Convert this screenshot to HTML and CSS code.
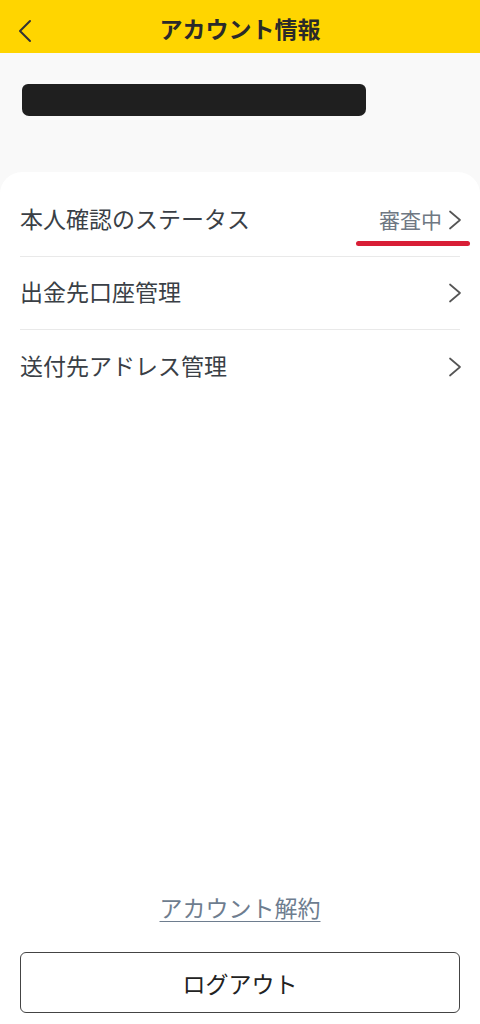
FILE: index.html
```html
<!DOCTYPE html>
<html lang="ja">
<head>
<meta charset="utf-8">
<link rel="stylesheet" href="styles.css">
</head>
<body>
<div class="app">
  <header class="header">
    <span class="back">
      <svg width="16" height="24" viewBox="0 0 16 24"><path d="M13 2 L3 12 L13 22" fill="none" stroke="#333" stroke-width="2" stroke-linecap="round" stroke-linejoin="round"/></svg>
    </span>
    <h1 class="title">アカウント情報</h1>
  </header>
  <section class="profile">
    <div class="redact"></div>
  </section>
  <main class="card">
    <div class="row">
      <span class="label">本人確認のステータス</span>
      <span class="right">
        <span class="status">審査中</span>
        <svg class="chev" width="14" height="20" viewBox="0 0 14 20"><path d="M2 1.5 L12 10 L2 18.5" fill="none" stroke="#555" stroke-width="1.7" stroke-linecap="round" stroke-linejoin="round"/></svg>
        <span class="mark"></span>
      </span>
    </div>
    <div class="row">
      <span class="label">出金先口座管理</span>
      <span class="right">
        <svg class="chev" width="14" height="20" viewBox="0 0 14 20"><path d="M2 1.5 L12 10 L2 18.5" fill="none" stroke="#555" stroke-width="1.7" stroke-linecap="round" stroke-linejoin="round"/></svg>
      </span>
    </div>
    <div class="row last">
      <span class="label">送付先アドレス管理</span>
      <span class="right">
        <svg class="chev" width="14" height="20" viewBox="0 0 14 20"><path d="M2 1.5 L12 10 L2 18.5" fill="none" stroke="#555" stroke-width="1.7" stroke-linecap="round" stroke-linejoin="round"/></svg>
      </span>
    </div>
    <div class="spacer"></div>
    <a class="cancel">アカウント解約</a>
    <button class="logout">ログアウト</button>
  </main>
</div>
</body>
</html>
```
FILE: styles.css
```css
* { box-sizing: border-box; }
html, body { margin: 0; padding: 0; }
body {
  font-family: "Noto Sans CJK JP", "Noto Sans", sans-serif;
  background: #f9f9f9;
  color: #3a3f46;
}
.app {
  width: 480px;
  height: 1024px;
  display: flex;
  flex-direction: column;
  overflow: hidden;
}
.header {
  height: 53px;
  background: #ffd500;
  display: flex;
  align-items: center;
  justify-content: center;
  position: relative;
  flex-shrink: 0;
}
.back {
  position: absolute;
  left: 17px;
  top: 19px;
  display: flex;
}
.title {
  margin: 0;
  font-size: 23px;
  font-weight: 700;
  color: #2a2a2a;
  line-height: 1;
  padding-top: 4px;
}
.profile {
  height: 119px;
  padding: 31px 0 0 22px;
  flex-shrink: 0;
}
.redact {
  width: 344px;
  height: 32px;
  background: #1f1f1f;
  border-radius: 6px 6px 7px 7px;
}
.card {
  flex: 1;
  background: #fff;
  border-radius: 22px 22px 0 0;
  padding: 12px 20px 10px 20px;
  display: flex;
  flex-direction: column;
}
.row {
  height: 73px;
  display: flex;
  align-items: center;
  justify-content: space-between;
  border-bottom: 1.5px solid #e9e9e9;
  padding-left: 0;
}
.row.last { border-bottom: none; }
.label {
  font-size: 23px;
  color: #3a3f46;
  line-height: 1;
  margin-top: -3px;
}
.right {
  display: flex;
  align-items: center;
  gap: 6px;
  position: relative;
}
.status {
  font-size: 21px;
  color: #6f7883;
  line-height: 1;
  margin-top: -2px;
}
.chev { display: block; margin-right: -2px; }
.mark {
  position: absolute;
  right: -10px;
  top: 31px;
  width: 114px;
  height: 5px;
  border-radius: 3px;
  background: #d81e36;
}
.spacer { flex: 1; }
.cancel {
  align-self: center;
  font-size: 23px;
  color: #6e7d8f;
  text-decoration: underline;
  text-decoration-thickness: 1px;
  text-underline-offset: 4px;
  line-height: 1;
  margin-bottom: 33px;
}
.logout {
  height: 61px;
  width: 100%;
  border: 1.5px solid #444;
  border-radius: 6px;
  background: #fff;
  font-family: inherit;
  font-size: 23px;
  color: #222;
  margin-bottom: 1px;
}
```
